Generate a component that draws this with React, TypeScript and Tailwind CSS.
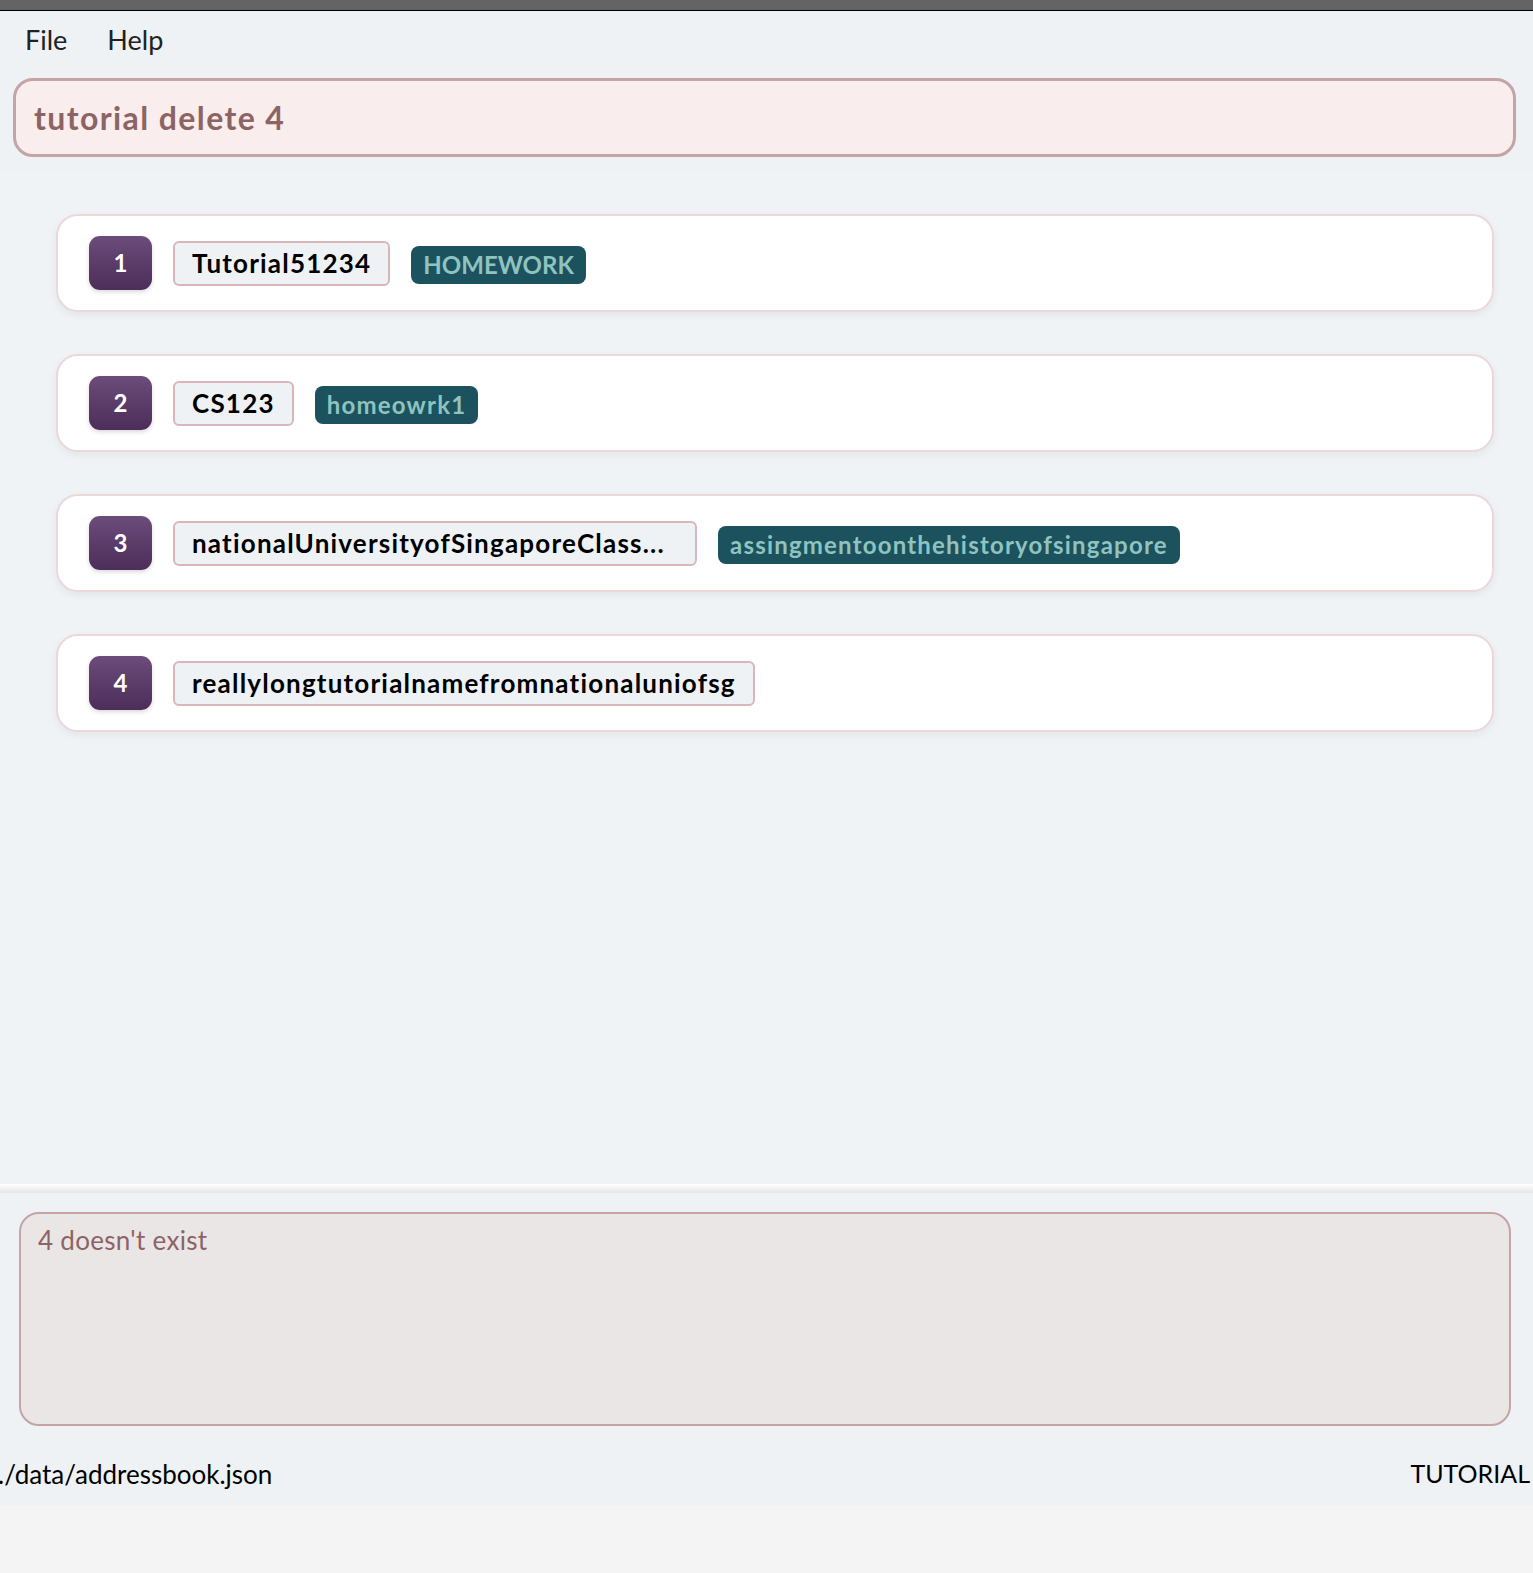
import React from 'react'

type Tutorial = { name: string; tag?: string; nameWidth?: string }

const tutorials: Tutorial[] = [
  { name: 'Tutorial51234', tag: 'HOMEWORK' },
  { name: 'CS123', tag: 'homeowrk1' },
  { name: 'nationalUniversityofSingaporeClass...', tag: 'assingmentoonthehistoryofsingapore', nameWidth: 'w-[524px]' },
  { name: 'reallylongtutorialnamefromnationaluniofsg' },
]

function TutorialCard({ index, t }: { index: number; t: Tutorial }) {
  const upperTag = t.tag !== undefined && t.tag === t.tag.toUpperCase()
  return (
    <div className="h-[98px] flex items-center pl-[31px] bg-white rounded-[22px] border-2 border-[#ecd7d9] shadow-[0_3px_8px_rgba(0,0,0,0.06)]">
      <div className="w-[63px] h-[54px] rounded-[11px] flex items-center justify-center bg-gradient-to-b from-[#6b4c7a] to-[#4d2e5a] shadow-[0_2px_4px_rgba(0,0,0,0.15)] text-white font-bold text-[24px]">
        {index}
      </div>
      <div className={`ml-[21px] h-[45px] flex items-center px-[17px] rounded-[6px] border-2 border-[#d9b6ba] bg-[#eef2f5] text-black font-bold text-[26px] tracking-[1.2px] whitespace-nowrap ${t.nameWidth ?? ''}`}>
        {t.name}
      </div>
      {t.tag && (
        <div className={`ml-[21px] mt-[4px] h-[38px] flex items-center px-[12px] rounded-[8px] bg-[#1b525e] text-[#8fc3bf] font-bold text-[24px] whitespace-nowrap ${upperTag ? 'tracking-normal' : 'tracking-[1.2px]'}`}>
          {t.tag}
        </div>
      )}
    </div>
  )
}

export default function App() {
  return (
    <div className="w-full h-[1573px] flex flex-col bg-[#f4f4f4] font-['Lato',_'Liberation_Sans',_sans-serif]">
      {/* title bar strip */}
      <div className="h-[11px] bg-[#646464] border-b border-black" />

      {/* menu */}
      <div className="h-[59px] flex items-center gap-[40px] pl-[25px] bg-[#eef2f5] text-[27px] text-[#222]">
        <span>File</span>
        <span>Help</span>
      </div>

      {/* command box */}
      <div className="bg-[#eef2f5] pl-[13px] pr-[17px] pt-[8px] pb-[14px]">
        <div className="h-[79px] flex items-center pl-[18px] rounded-[20px] border-[3px] border-[#c4a4a4] bg-[#f9eded] text-[#8c6464] font-bold text-[32px] tracking-[1.4px]">
          tutorial delete 4
        </div>
      </div>

      {/* list */}
      <div className="h-[1013px] bg-[#f0f3f6] pt-[43px] pl-[56px] pr-[39px] flex flex-col gap-[42px]">
        {tutorials.map((t, i) => (
          <TutorialCard key={i} index={i + 1} t={t} />
        ))}
      </div>

      {/* divider */}
      <div className="h-[9px] bg-gradient-to-b from-[#ffffff] to-[#e6e6e6]" />

      {/* result */}
      <div className="h-[250px] bg-[#eef2f5] pl-[19px] pr-[22px] pt-[19px]">
        <div className="h-[214px] rounded-[20px] border-2 border-[#c4a4a4] bg-[#ebe6e6] pl-[17px] pt-[7px] text-[#8c6464] text-[26px] tracking-[0.3px]">
          4 doesn't exist
        </div>
      </div>

      {/* status bar */}
      <div className="h-[62px] bg-[#eef2f5] flex items-center justify-between pr-[3px] text-[26px] text-black">
        <span className="-ml-[2px]">./data/addressbook.json</span>
        <span className="text-[25px]">TUTORIAL</span>
      </div>
    </div>
  )
}
